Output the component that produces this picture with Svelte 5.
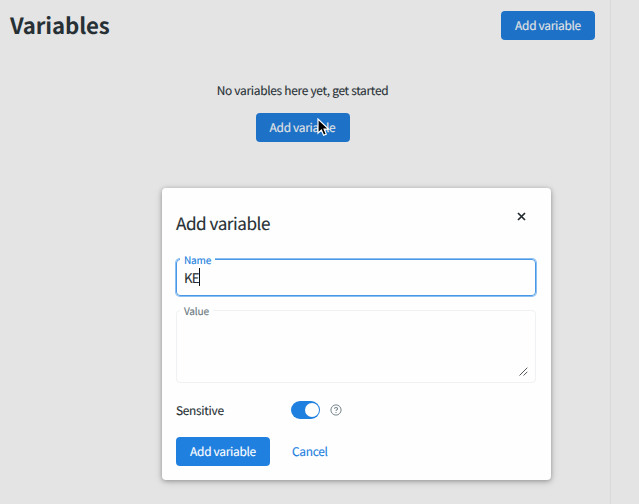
<script>
  let name = $state('KE');
  let value = $state('');
  let sensitive = $state(true);
</script>

<div class="page">
  <main>
    <header>
      <h1>Variables</h1>
      <button class="primary dim">Add variable</button>
    </header>
    <section>
      <p>No variables here yet, get started</p>
      <button class="primary dim">Add variable</button>
    </section>
  </main>

  <div class="dialog" role="dialog" aria-label="Add variable">
    <div class="heading">
      <h2>Add variable</h2>
      <button class="close" aria-label="Close">
        <svg width="9" height="9" viewBox="0 0 9 9"><path d="M1 1 8 8M8 1 1 8" stroke="#22292d" stroke-width="1.7" fill="none" /></svg>
      </button>
    </div>
    <div class="field focused">
      <span class="label">Name</span>
      <span class="text">{name}</span><i class="caret"></i>
    </div>
    <div class="field area">
      <span class="label">Value</span>
      <span class="text">{value}</span>
      <svg class="grip" width="9" height="9" viewBox="0 0 9 9"><path d="M.5 8.5 8.3.7M4.6 8.5 8.3 4.8" stroke="#555" stroke-width="1" fill="none" /></svg>
    </div>
    <div class="row">
      <span class="sensitive">Sensitive</span>
      <button class="toggle" class:on={sensitive} aria-label="Sensitive" onclick={() => (sensitive = !sensitive)}><i></i></button>
      <svg class="help" width="12" height="12" viewBox="0 0 12 12" fill="none" stroke="#76848a">
        <circle cx="6" cy="6" r="5.1" stroke-width="1" />
        <path d="M4.5 4.8C4.5 3 7.6 3 7.6 4.8 7.6 5.9 6 5.8 6 7" stroke-width="1.1" />
        <path d="M6 8v1" stroke-width="1.1" />
      </svg>
    </div>
    <div class="actions">
      <button class="primary">Add variable</button>
      <button class="link">Cancel</button>
    </div>
  </div>

  <svg class="cursor" width="14" height="20" viewBox="0 0 14 20">
    <path d="M1 1V15.2L4.4 12.1 6.6 17.3 9.3 16.1 7.1 11.1H11.6Z" fill="#000" stroke="#fff" stroke-width="1.2" />
  </svg>
</div>

<style>
  :global(body) { margin: 0; }
  .page {
    position: relative;
    width: 639px;
    height: 504px;
    overflow: hidden;
    background: #e4e4e4;
    color: #273035;
    font-family: "Noto Sans CJK SC", "Noto Sans", sans-serif;
    font-size: 11.9px;
    letter-spacing: -.28px;
    line-height: 18px;
    text-rendering: geometricPrecision;
    -webkit-text-stroke: .12px currentColor;
  }
  button { font: inherit; letter-spacing: inherit; border: 0; padding: 0; background: none; text-rendering: inherit; }
  h1, h2, p { margin: 0; }
  main {
    box-sizing: border-box;
    width: 611px;
    height: 504px;
    border-right: 1px solid #dadada;
    padding: 11px 15px 0 10px;
  }
  header { display: flex; justify-content: space-between; height: 29px; }
  h1 { font-size: 22.2px; letter-spacing: -.12px; font-weight: 700; line-height: 28px; -webkit-text-stroke: 0; }
  .primary {
    width: 94px;
    height: 29px;
    border-radius: 4px;
    background: #2080df;
    color: #fff;
    white-space: nowrap;
    padding-top: 1px;
  }
  .dim { background: #1d72c8; color: #e4e4e4; }
  section {
    display: flex;
    flex-direction: column;
    align-items: center;
    gap: 13px;
    padding-top: 42px;
  }
  .dialog {
    position: absolute;
    left: 162px;
    top: 188px;
    box-sizing: border-box;
    width: 389px;
    height: 292px;
    padding: 20px 15px 0 14px;
    border-radius: 4px;
    background: #fefefe;
    box-shadow: 0 1px 4px rgba(0, 0, 0, .28), 0 2px 8px rgba(0, 0, 0, .14);
  }
  .heading { display: flex; justify-content: space-between; height: 51px; }
  h2 { font-size: 17.1px; letter-spacing: -.46px; font-weight: 400; line-height: 29px; }
  .close { width: 9px; height: 9px; margin: 4px 10px 0 0; line-height: 0; }
  .close svg { display: block; }
  .field {
    position: relative;
    box-sizing: border-box;
    display: flex;
    width: 360px;
    height: 37px;
    border: 1px solid #f0f1f2;
    border-radius: 4px;
    padding: 8px 7px;
  }
  .focused {
    border-color: #4a98e5;
    box-shadow: 0 0 0 1px #8cbff1;
  }
  .label {
    position: absolute;
    left: 3px;
    top: -8px;
    padding: 0 4px;
    background: #fefefe;
    color: #6b7980;
    font-size: 10.1px;
    letter-spacing: -.2px;
    line-height: 15px;
  }
  .focused .label { color: #2080df; }
  .text { font-size: 13.2px; letter-spacing: -.7px; line-height: 19px; }
  .caret { width: 1px; height: 18px; background: #111; }
  .area { height: 73px; margin-top: 14px; }
  .grip { position: absolute; right: 7px; bottom: 6px; }
  .row { display: flex; align-items: center; height: 18px; margin-top: 18px; }
  .sensitive { width: 115px; padding-top: 1px; }
  .toggle {
    display: flex;
    justify-content: flex-start;
    box-sizing: border-box;
    width: 29px;
    height: 18px;
    padding: 2px;
    border-radius: 9px;
    background: #9aa5aa;
  }
  .toggle.on { justify-content: flex-end; padding-right: 1px; background: #2080df; }
  .toggle i { width: 14px; height: 14px; border-radius: 50%; background: #fff; }
  .help { margin-left: 10px; }
  .actions { display: flex; align-items: center; gap: 22px; margin-top: 18px; }
  .link { color: #2080df; padding-top: 1px; }
  .cursor { position: absolute; left: 317px; top: 118px; }
</style>
